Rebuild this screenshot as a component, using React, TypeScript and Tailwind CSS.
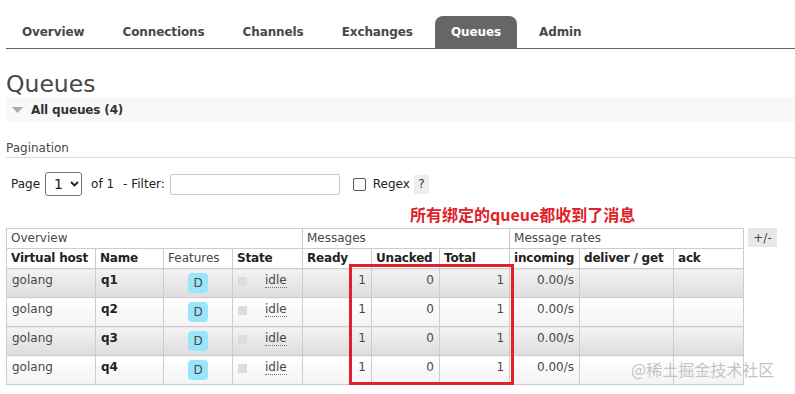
const tabs = ["Overview", "Connections", "Channels", "Exchanges", "Queues", "Admin"];

const queues = ["q1", "q2", "q3", "q4"];

const font = { fontFamily: '"DejaVu Sans", Verdana, sans-serif' };

function Tabs() {
  return (
    <nav className="pt-[16px] pl-[6px]">
      <ul className="flex gap-[6px] border-b border-[#666]">
        {tabs.map((t) => (
          <li
            key={t}
            className={
              t === "Queues"
                ? "h-[32px] px-4 leading-[32px] text-[12px] font-bold tracking-[-0.1px] rounded-t-[8px] bg-[#666] text-white"
                : "h-[32px] px-4 leading-[32px] text-[12px] font-bold tracking-[-0.1px] text-[#484848]"
            }
          >
            {t}
          </li>
        ))}
      </ul>
    </nav>
  );
}

function PageRow() {
  return (
    <div className="mt-[14px] flex items-center pl-[5px] text-[12px] text-[#222]">
      <span>Page</span>
      <div className="ml-[5px] flex h-[24px] w-[37px] items-center rounded-[3px] border border-[#767676] pl-[8px] text-[14px]">
        <span>1</span>
        <svg width="9" height="6" viewBox="0 0 9 6" className="ml-[7px]">
          <path d="M1 1l3.5 3.5L8 1" fill="none" stroke="#222" strokeWidth="1.8" />
        </svg>
      </div>
      <span className="ml-[9px]">of 1</span>
      <span className="ml-[9px]">- Filter:</span>
      <div className="ml-[5px] h-[21px] w-[170px] rounded-[2px] border border-[#c8c8c8] bg-white" />
      <div className="ml-[13px] h-[13px] w-[13px] rounded-[2px] border border-[#555] bg-white" />
      <span className="ml-[7px]">Regex</span>
      <span className="ml-[4px] flex h-[19px] w-[15px] items-center justify-center bg-[#eee] text-[#333]">?</span>
    </div>
  );
}

function QueueTable() {
  const th = "border border-[#ccc] px-[4px] text-left align-top leading-[19px] whitespace-nowrap";
  return (
    <div className="mt-[32px] flex items-start">
      <table className="w-[737px] table-fixed border-collapse text-[12px]">
        <colgroup>
          <col className="w-[89px]" />
          <col className="w-[68px]" />
          <col className="w-[69px]" />
          <col className="w-[70px]" />
          <col className="w-[69px]" />
          <col className="w-[68px]" />
          <col className="w-[70px]" />
          <col className="w-[70px]" />
          <col className="w-[94px]" />
          <col className="w-[70px]" />
        </colgroup>
        <thead>
          <tr>
            <th colSpan={4} className={th + " font-normal text-[#484848]"}>Overview</th>
            <th colSpan={3} className={th + " font-normal text-[#484848]"}>Messages</th>
            <th colSpan={3} className={th + " font-normal text-[#484848]"}>Message rates</th>
          </tr>
          <tr className="text-[#222] tracking-[-0.2px]">
            <th className={th + " font-bold"}>Virtual host</th>
            <th className={th + " font-bold"}>Name</th>
            <th className={th + " font-normal text-center text-[#484848] tracking-normal"}>Features</th>
            <th className={th + " font-bold"}>State</th>
            <th className={th + " font-bold"}>Ready</th>
            <th className={th + " font-bold"}>Unacked</th>
            <th className={th + " font-bold"}>Total</th>
            <th className={th + " font-bold"}>incoming</th>
            <th className={th + " font-bold"}>deliver / get</th>
            <th className={th + " font-bold"}>ack</th>
          </tr>
        </thead>
        <tbody className="text-[#484848]">
          {queues.map((q, i) => {
            const bg =
              i % 2 === 0
                ? "bg-gradient-to-b from-[#f3f3f3] to-[#dddddd]"
                : "bg-gradient-to-b from-white to-[#f3f3f3]";
            const td = `border border-[#ccc] px-[5px] py-[4px] align-top leading-[14px] ${bg}`;
            return (
              <tr key={q}>
                <td className={td}>golang</td>
                <td className={td + " font-bold text-[#222]"}>{q}</td>
                <td className={td}>
                  <div className="mx-auto flex h-[20px] w-[20px] items-center justify-center rounded-[4px] bg-[#99e6fa] text-[#484848]">
                    D
                  </div>
                </td>
                <td className={td}>
                  <div className="flex items-center pt-[1px]">
                    <span className="h-[9px] w-[9px] bg-[#ddd]" />
                    <span className="ml-[18px] border-b border-dotted border-[#777] leading-[13px]">idle</span>
                  </div>
                </td>
                <td className={td + " text-right"}>1</td>
                <td className={td + " text-right"}>0</td>
                <td className={td + " text-right"}>1</td>
                <td className={td + " text-right"}>0.00/s</td>
                <td className={td} />
                <td className={td} />
              </tr>
            );
          })}
        </tbody>
      </table>
      <span className="ml-[4px] flex h-[19px] w-[29px] items-center justify-center bg-[#e8e8e8] text-[12px] text-[#444]">
        +/-
      </span>
    </div>
  );
}

export default function App() {
  return (
    <div className="relative h-[394px] w-[795px] overflow-hidden bg-white text-[#484848]" style={font}>
      <Tabs />
      <div className="pl-[6px]">
        <h1 className="mt-[22px] text-[23.5px] font-normal leading-[26px] text-[#484848]">Queues</h1>
        <div className="flex h-[25px] items-center bg-[#f8f8f8] pl-[6px]">
          <svg width="11" height="6" viewBox="0 0 11 6">
            <polygon points="0,0 11,0 5.5,6" fill="#aaa" />
          </svg>
          <span className="ml-[8px] text-[12px] font-bold tracking-[-0.15px] text-[#333]">All queues (4)</span>
        </div>
        <div className="mt-[19px] border-b border-[#ddd] pb-[2px] text-[12px] leading-[14px]">Pagination</div>
        <PageRow />
        <QueueTable />
      </div>

      {/* annotation overlays */}
      <div
        className="absolute left-[410px] top-[203px] text-[16px] font-bold leading-[22px] text-[#e02129]"
        style={{ fontFamily: '"Noto Sans CJK SC", "Noto Sans", sans-serif' }}
      >
        所有绑定的queue都收到了消息
      </div>
      <div className="absolute left-[349px] top-[264px] h-[121px] w-[165px] border-[3px] border-[#e02129]" />
      <div
        className="absolute left-[631px] top-[358px] text-[16px] leading-[22px] text-[#c4c4c4]"
        style={{ fontFamily: '"Noto Sans CJK SC", sans-serif' }}
      >
        @稀土掘金技术社区
      </div>
    </div>
  );
}
